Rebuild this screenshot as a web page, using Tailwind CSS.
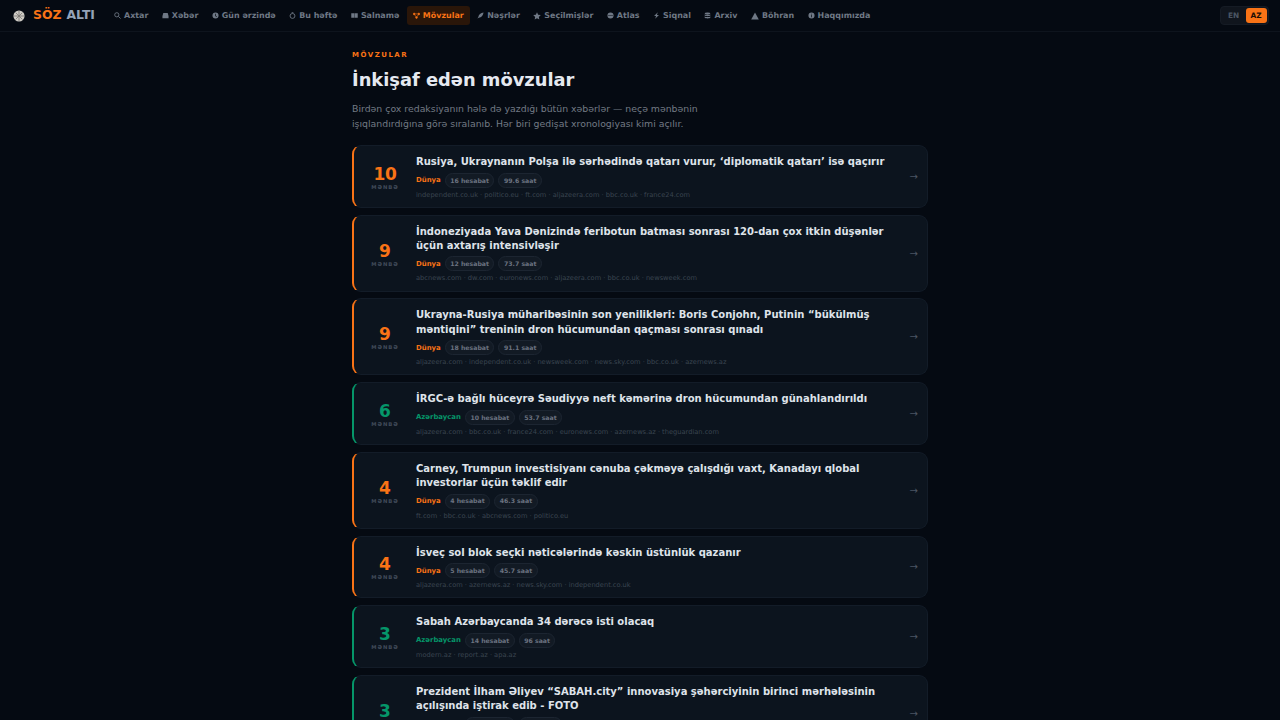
<!DOCTYPE html>
<html lang="az"><head><meta charset="utf-8"><script src="https://cdn.jsdelivr.net/npm/@tailwindcss/browser@4"></script></head>
<body class="bg-[#050a12] font-['DejaVu_Sans',sans-serif] h-[720px] overflow-hidden">
<header class="h-8 border-b border-[#0e141d] flex items-center pl-[13px] pr-[11.500px]">
  <div class="flex items-center gap-[8px] w-[95px] shrink-0">
    <svg width="12" height="12" viewBox="0 0 14 14" class="shrink-0"><circle cx="7" cy="7" r="6.500" fill="#cfccc6"/><path d="M7 1v12M1 7h12M3 3l8 8M11 3l-8 8" stroke="#77746e" stroke-width=".9"/></svg>
    <span class="text-[12.400px] font-bold leading-none whitespace-nowrap"><span class="text-[#f97316]">SÖZ</span><span class="text-[#94a3b8] ml-[5px]">ALTI</span></span>
  </div>
  <nav class="flex items-center gap-[1.500px] text-[7.950px] font-bold text-[#6f7885] whitespace-nowrap">
    <a class="flex items-center gap-[3px] px-[6px] h-[19px]"><svg width="7" height="7" viewBox="0 0 8 8" fill="none" stroke="#6f7885" stroke-width="1"><circle cx="3.200" cy="3.200" r="2.400"/><path d="M5 5l2.500 2.500"/></svg>Axtar</a>
    <a class="flex items-center gap-[3px] px-[6px] h-[19px]"><svg width="7" height="7" viewBox="0 0 8 8" fill="#6f7885"><path d="M1.500 1h5l1 3.500v2.500h-7V4.500z"/></svg>Xəbər</a>
    <a class="flex items-center gap-[3px] px-[6px] h-[19px]"><svg width="7" height="7" viewBox="0 0 8 8" fill="#6f7885"><path fill-rule="evenodd" d="M4 .5a3.500 3.500 0 1 0 0 7 3.500 3.500 0 0 0 0-7zM3.600 2h.8v2.200l1.300.8-.4.6-1.700-1z"/></svg>Gün ərzində</a>
    <a class="flex items-center gap-[3px] px-[6px] h-[19px]"><svg width="7" height="7" viewBox="0 0 8 8" fill="none" stroke="#6f7885"><circle cx="4" cy="4.500" r="2.800"/><path d="M3 .8h2"/></svg>Bu həftə</a>
    <a class="flex items-center gap-[3px] px-[6px] h-[19px]"><svg width="7" height="7" viewBox="0 0 8 8" fill="#6f7885"><path d="M.3 1.300h3.500v5.400H.3zM4.200 1.300h3.500v5.400H4.200z"/></svg>Salnamə</a>
    <a class="flex items-center gap-[3px] px-[6px] h-[19px] rounded-[3px] bg-[#2a1609] text-[#f97316]"><svg width="7" height="7" viewBox="0 0 8 8" fill="#f97316" stroke="#f97316" stroke-width=".7"><circle cx="1.300" cy="2.200" r="1"/><circle cx="6.700" cy="2.200" r="1"/><circle cx="4" cy="6.300" r="1"/><path d="M1.300 2.200h5.400M1.300 2.200L4 6.300l2.700-4.100" fill="none"/></svg>Mövzular</a>
    <a class="flex items-center gap-[3px] px-[6px] h-[19px]"><svg width="7" height="7" viewBox="0 0 8 8" fill="#6f7885"><path d="M7.500.5C4.200.8 2 2.800 1.500 5.800L.5 7.500l1.600-1C5 6.200 7 4 7.500.5z"/></svg>Nəşrlər</a>
    <a class="flex items-center gap-[3px] px-[6px] h-[19px]"><svg width="8" height="8" viewBox="0 0 8 8" fill="#6f7885"><path d="M4 .3l1.150 2.450 2.650.35-1.950 1.800.5 2.650L4 6.250 1.650 7.550l.5-2.650L.2 3.100l2.650-.35z"/></svg>Seçilmişlər</a>
    <a class="flex items-center gap-[3px] px-[6px] h-[19px]"><svg width="7" height="7" viewBox="0 0 8 8" fill="#6f7885"><path fill-rule="evenodd" d="M4 .5a3.500 3.500 0 1 0 0 7 3.500 3.500 0 0 0 0-7zM1.200 3.600h5.600v.8H1.200z"/></svg>Atlas</a>
    <a class="flex items-center gap-[3px] px-[6px] h-[19px]"><svg width="7" height="7" viewBox="0 0 8 8" fill="#6f7885"><path d="M5.500.3L1.200 4.600h2.300L2.500 7.700l4.300-4.300H4.400z"/></svg>Siqnal</a>
    <a class="flex items-center gap-[3px] px-[6px] h-[19px]"><svg width="7" height="7" viewBox="0 0 8 8" fill="#6f7885"><ellipse cx="4" cy="1.800" rx="3.300" ry="1.300"/><path d="M.7 2.800c1 1 5.600 1 6.600 0v1.300c-1 1-5.600 1-6.600 0zM.7 5c1 1 5.600 1 6.600 0v1.300c-1 1.400-5.600 1.400-6.600 0z"/></svg>Arxiv</a>
    <a class="flex items-center gap-[3px] px-[6px] h-[19px]"><svg width="8" height="8" viewBox="0 0 8 8" fill="#6f7885"><path d="M4 .6L7.800 7.400H.2z"/></svg>Böhran</a>
    <a class="flex items-center gap-[3px] px-[6px] h-[19px]"><svg width="7" height="7" viewBox="0 0 8 8" fill="#6f7885"><path fill-rule="evenodd" d="M4 .5a3.500 3.500 0 1 0 0 7 3.500 3.500 0 0 0 0-7zM3.600 3.500h.8V6h-.8zM3.600 2h.8v.8h-.8z"/></svg>Haqqımızda</a>
  </nav>
  <div class="ml-auto flex items-center rounded-[4px] bg-[#10151d] border border-[#151b24] p-[1px] text-[7.400px] font-bold">
    <span class="h-[15px] w-[24px] flex items-center justify-center text-[#4b5563]">EN</span>
    <span class="w-[21px] h-[15px] flex items-center justify-center rounded-[3px] bg-[#f97316] text-[#1a0e05]">AZ</span>
  </div>
</header>
<main class="w-[576px] mx-auto pt-[18px]">
  <p class="text-[7px] font-bold tracking-[1.500px] text-[#f97316] leading-[10px]">MÖVZULAR</p>
  <h1 class="text-[17.850px] font-bold text-[#e5e9f0] leading-[26px] mt-[7px]">İnkişaf edən mövzular</h1>
  <p class="text-[9.360px] text-[#737a85] leading-[15px] mt-[8px] mb-[14px] w-[360px]">Birdən çox redaksiyanın hələ də yazdığı bütün xəbərlər — neçə mənbənin işıqlandırdığına görə sıralanıb. Hər biri gedişat xronologiyası kimi açılır.</p>
  <div class="flex flex-col gap-[6.700px]">

    <a class="flex items-center rounded-[9px] border border-[#131c28] border-l-2 border-l-[#f97316] bg-[#0c141e] pr-[9px]">
      <div class="w-[62px] shrink-0 flex flex-col items-center pt-[3px]"><span class="text-[17px] font-bold leading-[18px] text-[#f97316] tracking-[-0.3px]">10</span><span class="text-[5.300px] font-bold tracking-[1px] text-[#414b5a] leading-[8px]">MƏNBƏ</span></div>
      <div class="flex-1 min-w-0 pt-[9px] pb-[7.200px]"><h2 class="text-[10px] font-bold text-[#dfe3ea] leading-[14.200px]">Rusiya, Ukraynanın Polşa ilə sərhədində qatarı vurur, ‘diplomatik qatarı’ isə qaçırır</h2>
        <div class="flex items-center gap-[4px] mt-[3.500px]"><span class="text-[6.900px] font-bold text-[#f97316]">Dünya</span><span class="text-[6.200px] font-bold text-[#6b7280] bg-[#121a24] border border-[#1c2531] rounded-full h-[15px] px-[4.500px] flex items-center">16 hesabat</span><span class="text-[6.200px] font-bold text-[#6b7280] bg-[#121a24] border border-[#1c2531] rounded-full h-[15px] px-[4.500px] flex items-center">99.6 saat</span></div>
        <p class="text-[6.670px] text-[#3a4450] leading-[10px] mt-[2px]">independent.co.uk · politico.eu · ft.com · aljazeera.com · bbc.co.uk · france24.com</p></div>
      <span class="text-[#4b5563] text-[10px] ml-[8px]">→</span>
    </a>

    <a class="flex items-center rounded-[9px] border border-[#131c28] border-l-2 border-l-[#f97316] bg-[#0c141e] pr-[9px]">
      <div class="w-[62px] shrink-0 flex flex-col items-center pt-[3px]"><span class="text-[17px] font-bold leading-[18px] text-[#f97316]">9</span><span class="text-[5.300px] font-bold tracking-[1px] text-[#414b5a] leading-[8px]">MƏNBƏ</span></div>
      <div class="flex-1 min-w-0 pt-[9px] pb-[7.200px]"><h2 class="text-[10px] font-bold text-[#dfe3ea] leading-[14.200px]">İndoneziyada Yava Dənizində feribotun batması sonrası 120-dan çox itkin düşənlər üçün axtarış intensivləşir</h2>
        <div class="flex items-center gap-[4px] mt-[3.500px]"><span class="text-[6.900px] font-bold text-[#f97316]">Dünya</span><span class="text-[6.200px] font-bold text-[#6b7280] bg-[#121a24] border border-[#1c2531] rounded-full h-[15px] px-[4.500px] flex items-center">12 hesabat</span><span class="text-[6.200px] font-bold text-[#6b7280] bg-[#121a24] border border-[#1c2531] rounded-full h-[15px] px-[4.500px] flex items-center">73.7 saat</span></div>
        <p class="text-[6.670px] text-[#3a4450] leading-[10px] mt-[2px]">abcnews.com · dw.com · euronews.com · aljazeera.com · bbc.co.uk · newsweek.com</p></div>
      <span class="text-[#4b5563] text-[10px] ml-[8px]">→</span>
    </a>

    <a class="flex items-center rounded-[9px] border border-[#131c28] border-l-2 border-l-[#f97316] bg-[#0c141e] pr-[9px]">
      <div class="w-[62px] shrink-0 flex flex-col items-center pt-[3px]"><span class="text-[17px] font-bold leading-[18px] text-[#f97316]">9</span><span class="text-[5.300px] font-bold tracking-[1px] text-[#414b5a] leading-[8px]">MƏNBƏ</span></div>
      <div class="flex-1 min-w-0 pt-[9px] pb-[7.200px]"><h2 class="text-[10px] font-bold text-[#dfe3ea] leading-[14.200px]">Ukrayna-Rusiya müharibəsinin son yenilikləri: Boris Conjohn, Putinin “bükülmüş məntiqini” treninin dron hücumundan qaçması sonrası qınadı</h2>
        <div class="flex items-center gap-[4px] mt-[3.500px]"><span class="text-[6.900px] font-bold text-[#f97316]">Dünya</span><span class="text-[6.200px] font-bold text-[#6b7280] bg-[#121a24] border border-[#1c2531] rounded-full h-[15px] px-[4.500px] flex items-center">18 hesabat</span><span class="text-[6.200px] font-bold text-[#6b7280] bg-[#121a24] border border-[#1c2531] rounded-full h-[15px] px-[4.500px] flex items-center">91.1 saat</span></div>
        <p class="text-[6.670px] text-[#3a4450] leading-[10px] mt-[2px]">aljazeera.com · independent.co.uk · newsweek.com · news.sky.com · bbc.co.uk · azernews.az</p></div>
      <span class="text-[#4b5563] text-[10px] ml-[8px]">→</span>
    </a>

    <a class="flex items-center rounded-[9px] border border-[#131c28] border-l-2 border-l-[#059669] bg-[#0c141e] pr-[9px]">
      <div class="w-[62px] shrink-0 flex flex-col items-center pt-[3px]"><span class="text-[17px] font-bold leading-[18px] text-[#059669]">6</span><span class="text-[5.300px] font-bold tracking-[1px] text-[#414b5a] leading-[8px]">MƏNBƏ</span></div>
      <div class="flex-1 min-w-0 pt-[9px] pb-[7.200px]"><h2 class="text-[10px] font-bold text-[#dfe3ea] leading-[14.200px]">İRGC-ə bağlı hüceyrə Səudiyyə neft kəmərinə dron hücumundan günahlandırıldı</h2>
        <div class="flex items-center gap-[4px] mt-[3.500px]"><span class="text-[6.900px] font-bold text-[#059669]">Azərbaycan</span><span class="text-[6.200px] font-bold text-[#6b7280] bg-[#121a24] border border-[#1c2531] rounded-full h-[15px] px-[4.500px] flex items-center">10 hesabat</span><span class="text-[6.200px] font-bold text-[#6b7280] bg-[#121a24] border border-[#1c2531] rounded-full h-[15px] px-[4.500px] flex items-center">53.7 saat</span></div>
        <p class="text-[6.670px] text-[#3a4450] leading-[10px] mt-[2px]">aljazeera.com · bbc.co.uk · france24.com · euronews.com · azernews.az · theguardian.com</p></div>
      <span class="text-[#4b5563] text-[10px] ml-[8px]">→</span>
    </a>

    <a class="flex items-center rounded-[9px] border border-[#131c28] border-l-2 border-l-[#f97316] bg-[#0c141e] pr-[9px]">
      <div class="w-[62px] shrink-0 flex flex-col items-center pt-[3px]"><span class="text-[17px] font-bold leading-[18px] text-[#f97316]">4</span><span class="text-[5.300px] font-bold tracking-[1px] text-[#414b5a] leading-[8px]">MƏNBƏ</span></div>
      <div class="flex-1 min-w-0 pt-[9px] pb-[7.200px]"><h2 class="text-[10px] font-bold text-[#dfe3ea] leading-[14.200px]">Carney, Trumpun investisiyanı cənuba çəkməyə çalışdığı vaxt, Kanadayı qlobal investorlar üçün təklif edir</h2>
        <div class="flex items-center gap-[4px] mt-[3.500px]"><span class="text-[6.900px] font-bold text-[#f97316]">Dünya</span><span class="text-[6.200px] font-bold text-[#6b7280] bg-[#121a24] border border-[#1c2531] rounded-full h-[15px] px-[4.500px] flex items-center">4 hesabat</span><span class="text-[6.200px] font-bold text-[#6b7280] bg-[#121a24] border border-[#1c2531] rounded-full h-[15px] px-[4.500px] flex items-center">46.3 saat</span></div>
        <p class="text-[6.670px] text-[#3a4450] leading-[10px] mt-[2px]">ft.com · bbc.co.uk · abcnews.com · politico.eu</p></div>
      <span class="text-[#4b5563] text-[10px] ml-[8px]">→</span>
    </a>

    <a class="flex items-center rounded-[9px] border border-[#131c28] border-l-2 border-l-[#f97316] bg-[#0c141e] pr-[9px]">
      <div class="w-[62px] shrink-0 flex flex-col items-center pt-[3px]"><span class="text-[17px] font-bold leading-[18px] text-[#f97316]">4</span><span class="text-[5.300px] font-bold tracking-[1px] text-[#414b5a] leading-[8px]">MƏNBƏ</span></div>
      <div class="flex-1 min-w-0 pt-[9px] pb-[7.200px]"><h2 class="text-[10px] font-bold text-[#dfe3ea] leading-[14.200px]">İsveç sol blok seçki nəticələrində kəskin üstünlük qazanır</h2>
        <div class="flex items-center gap-[4px] mt-[3.500px]"><span class="text-[6.900px] font-bold text-[#f97316]">Dünya</span><span class="text-[6.200px] font-bold text-[#6b7280] bg-[#121a24] border border-[#1c2531] rounded-full h-[15px] px-[4.500px] flex items-center">5 hesabat</span><span class="text-[6.200px] font-bold text-[#6b7280] bg-[#121a24] border border-[#1c2531] rounded-full h-[15px] px-[4.500px] flex items-center">45.7 saat</span></div>
        <p class="text-[6.670px] text-[#3a4450] leading-[10px] mt-[2px]">aljazeera.com · azernews.az · news.sky.com · independent.co.uk</p></div>
      <span class="text-[#4b5563] text-[10px] ml-[8px]">→</span>
    </a>

    <a class="flex items-center rounded-[9px] border border-[#131c28] border-l-2 border-l-[#059669] bg-[#0c141e] pr-[9px]">
      <div class="w-[62px] shrink-0 flex flex-col items-center pt-[3px]"><span class="text-[17px] font-bold leading-[18px] text-[#059669]">3</span><span class="text-[5.300px] font-bold tracking-[1px] text-[#414b5a] leading-[8px]">MƏNBƏ</span></div>
      <div class="flex-1 min-w-0 pt-[9px] pb-[7.200px]"><h2 class="text-[10px] font-bold text-[#dfe3ea] leading-[14.200px]">Sabah Azərbaycanda 34 dərəcə isti olacaq</h2>
        <div class="flex items-center gap-[4px] mt-[3.500px]"><span class="text-[6.900px] font-bold text-[#059669]">Azərbaycan</span><span class="text-[6.200px] font-bold text-[#6b7280] bg-[#121a24] border border-[#1c2531] rounded-full h-[15px] px-[4.500px] flex items-center">14 hesabat</span><span class="text-[6.200px] font-bold text-[#6b7280] bg-[#121a24] border border-[#1c2531] rounded-full h-[15px] px-[4.500px] flex items-center">96 saat</span></div>
        <p class="text-[6.670px] text-[#3a4450] leading-[10px] mt-[2px]">modern.az · report.az · apa.az</p></div>
      <span class="text-[#4b5563] text-[10px] ml-[8px]">→</span>
    </a>

    <a class="flex items-center rounded-[9px] border border-[#131c28] border-l-2 border-l-[#059669] bg-[#0c141e] pr-[9px]">
      <div class="w-[62px] shrink-0 flex flex-col items-center pt-[3px]"><span class="text-[17px] font-bold leading-[18px] text-[#059669]">3</span><span class="text-[5.300px] font-bold tracking-[1px] text-[#414b5a] leading-[8px]">MƏNBƏ</span></div>
      <div class="flex-1 min-w-0 pt-[9px] pb-[7.200px]"><h2 class="text-[10px] font-bold text-[#dfe3ea] leading-[14.200px]">Prezident İlham Əliyev “SABAH.city” innovasiya şəhərciyinin birinci mərhələsinin açılışında iştirak edib - FOTO</h2>
        <div class="flex items-center gap-[4px] mt-[3.500px]"><span class="text-[6.900px] font-bold text-[#059669]">Azərbaycan</span><span class="text-[6.200px] font-bold text-[#6b7280] bg-[#121a24] border border-[#1c2531] rounded-full h-[15px] px-[4.500px] flex items-center">24 hesabat</span><span class="text-[6.200px] font-bold text-[#6b7280] bg-[#121a24] border border-[#1c2531] rounded-full h-[15px] px-[4.500px] flex items-center">10.2 saat</span></div>
        <p class="text-[6.670px] text-[#3a4450] leading-[10px] mt-[2px]">report.az · apa.az · modern.az</p></div>
      <span class="text-[#4b5563] text-[10px] ml-[8px]">→</span>
    </a>
  </div>
</main>
</body></html>
